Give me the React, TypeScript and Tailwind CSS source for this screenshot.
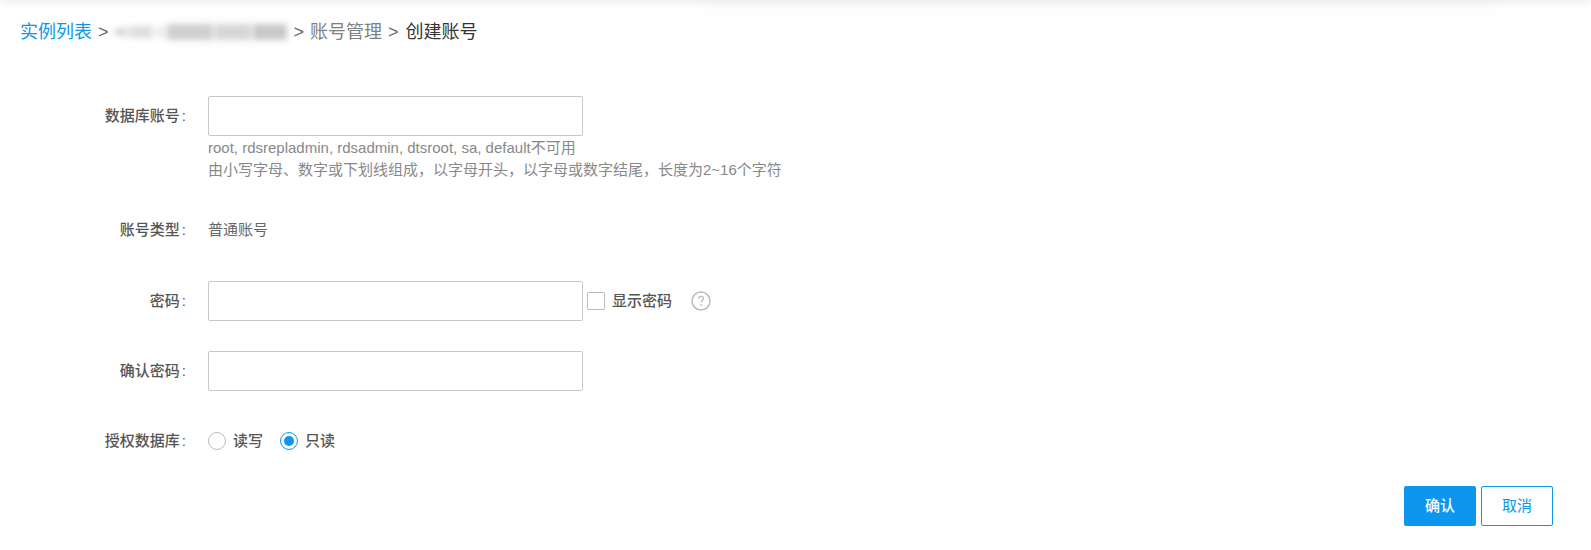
const font = "font-['Liberation_Sans','Noto_Sans_CJK_SC',sans-serif]";

function Label({ text }: { text: string }) {
  return (
    <label className="w-[186px] flex-shrink-0 text-right text-[15px] font-medium text-[#555555]">
      {text}<span className="ml-[2px]">:</span>
    </label>
  );
}

function TextInput() {
  return <input type="text" className="h-10 w-[375px] rounded-[2px] border border-[#c8c8c8] bg-white outline-none" />;
}

function Radio({ label, checked }: { label: string; checked?: boolean }) {
  return (
    <span className="flex items-center gap-[7px]">
      <span className={`flex h-[18px] w-[18px] items-center justify-center rounded-full border ${checked ? 'border-[1.5px] border-[#0c96ee]' : 'border-[#bbbbbb]'}`}>
        {checked && <span className="h-[10px] w-[10px] rounded-full bg-[#0c96ee]" />}
      </span>
      <span className="text-[15px] font-medium text-[#555555]">{label}</span>
    </span>
  );
}

export default function App() {
  return (
    <div className={`${font} relative h-[550px] w-[1591px] overflow-hidden bg-white`}>
      {/* top shadows from the header above */}
      <div className="absolute left-0 right-0 top-[-8px] h-[8px] shadow-[0_0_10px_rgba(0,0,0,0.12)]" />
      <div className="absolute left-[700px] right-[90px] top-[-16px] h-[16px] shadow-[0_10px_18px_rgba(0,0,0,0.025)]" />

      <nav className="flex h-[63px] items-center pl-5 text-lg">
        <a className="text-[#0c96ee]">实例列表</a>
        <span className="mx-[6px] text-[#666666]">&gt;</span>
        <span className="flex h-5 w-[173px] items-center gap-[2px] blur-[3px]">
          <span className="h-[8px] w-[12px] bg-[#d4d4d4]" />
          <span className="h-[12px] w-[24px] bg-[#dedede]" />
          <span className="h-[10px] w-[10px] bg-[#ececec]" />
          <span className="h-[16px] w-[46px] bg-[#cecece]" />
          <span className="h-[16px] w-[36px] bg-[#d6d6d6]" />
          <span className="h-[16px] w-[34px] bg-[#c8c8c8]" />
        </span>
        <span className="mx-[6px] text-[#666666]">&gt;</span>
        <span className="text-[#808080]">账号管理</span>
        <span className="ml-[6px] mr-[7px] text-[#666666]">&gt;</span>
        <span className="text-[#333333]">创建账号</span>
      </nav>

      <form className="flex flex-col">
        <div className="mt-[33px] flex items-center gap-[22px]">
          <Label text="数据库账号" />
          <TextInput />
        </div>
        <div className="ml-[208px] mt-[1px] text-[15px] leading-[22px] text-[#888888]">
          <p>root, rdsrepladmin, rdsadmin, dtsroot, sa, default不可用</p>
          <p>由小写字母、数字或下划线组成，以字母开头，以字母或数字结尾，长度为2~16个字符</p>
        </div>

        <div className="mt-[39px] flex h-5 items-center gap-[22px]">
          <Label text="账号类型" />
          <span className="text-[15px] leading-5 text-[#666666]">普通账号</span>
        </div>

        <div className="mt-[41px] flex items-center gap-[22px]">
          <Label text="密码" />
          <div className="flex items-center">
            <TextInput />
            <span className="ml-[4px] h-[18px] w-[18px] rounded-[2px] border border-[#bbbbbb]" />
            <span className="ml-[7px] text-[15px] font-medium text-[#555555]">显示密码</span>
            <svg className="ml-[19px]" width="20" height="20" viewBox="0 0 20 20" fill="none">
              <circle cx="10" cy="10" r="9" stroke="#bdbdbd" strokeWidth="1.5" />
              <path d="M7.6 7.8c0-1.5 1.1-2.4 2.5-2.4s2.4.9 2.4 2.1c0 1.9-2.4 1.9-2.4 3.9" stroke="#bdbdbd" strokeWidth="1.3" />
              <circle cx="10.1" cy="14" r="0.9" fill="#bdbdbd" />
            </svg>
          </div>
        </div>

        <div className="mt-[30px] flex items-center gap-[22px]">
          <Label text="确认密码" />
          <TextInput />
        </div>

        <div className="mt-[40px] flex h-5 items-center gap-[22px]">
          <Label text="授权数据库" />
          <div className="flex items-center gap-[17px]">
            <Radio label="读写" />
            <Radio label="只读" checked />
          </div>
        </div>

        <div className="mt-[35px] flex justify-end gap-[5px] pr-[38px]">
          <button type="button" className="h-10 w-[72px] rounded-[2px] bg-[#0c96ee] text-[15px] font-medium text-white">确认</button>
          <button type="button" className="h-10 w-[72px] rounded-[2px] border border-[#0c96ee] bg-white text-[15px] text-[#0c96ee]">取消</button>
        </div>
      </form>
    </div>
  );
}
